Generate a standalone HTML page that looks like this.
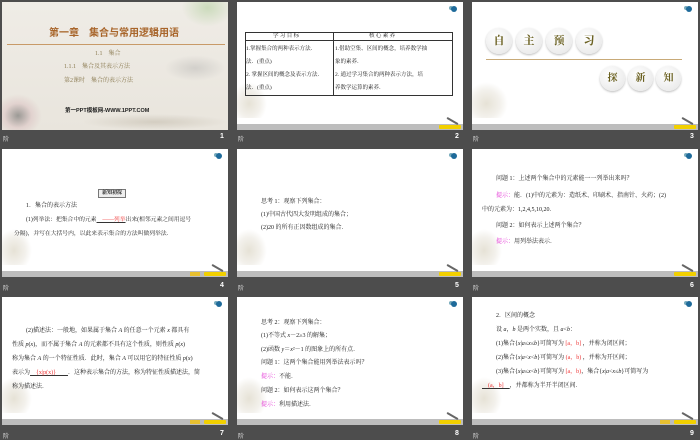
<!DOCTYPE html>
<html><head><meta charset="utf-8"><style>
*{margin:0;padding:0;box-sizing:border-box}
body{width:700px;height:438px;background:#4d4d4d;position:relative;overflow:hidden;font-family:"Liberation Serif","Noto Serif CJK SC","Noto Sans CJK SC",serif;}
.s{position:absolute;width:226px;height:128px;background:#fff;overflow:hidden}
.bar{position:absolute;left:0;right:0;bottom:0;height:6px;background:#bdbdbd}
.bd{position:absolute;bottom:1px;right:2px;width:22px;height:4px;background:#f2d000;border-radius:1px}
.bd2{position:absolute;bottom:1px;right:28px;width:10px;height:4px;background:#e8c030}
.pen{position:absolute;right:4px;bottom:8px;width:13px;height:2px;background:#666;transform:rotate(30deg);border-radius:2px}
.ic{position:absolute;right:6px;top:4px;width:6px;height:6px;border-radius:50%;background:#1e6a9a;box-shadow:-3px -1px 0 -1px #7ab}
.fl{position:absolute;left:0;bottom:6px;width:30px;height:36px;background:radial-gradient(ellipse at 40% 60%,#e6e2d6 0,#f3f1ec 45%,rgba(255,255,255,0) 70%)}
.cap{position:absolute;color:#ddd;font-size:6px;font-family:"Liberation Sans","Noto Sans CJK SC",sans-serif}
.n{position:absolute;color:#fff;font-size:7px;font-weight:bold;font-family:"Liberation Sans",sans-serif}
.t{position:absolute;font-size:6px;color:#1a1a1a;white-space:nowrap;line-height:7px}
.r{color:#e33}.m{color:#e020d0}
</style></head><body>

<!-- slide1 -->
<div class="s" style="left:2px;top:2px;background:linear-gradient(#efece6,#e9e5dd)">
<div style="position:absolute;left:175px;top:0;width:51px;height:28px;background:radial-gradient(ellipse at 60% 20%,rgba(120,180,90,.3),rgba(0,0,0,0) 60%)"></div>
<div style="position:absolute;left:160px;top:52px;width:66px;height:28px;background:radial-gradient(ellipse,rgba(150,150,150,.3),rgba(0,0,0,0) 65%)"></div>
<div style="position:absolute;left:0;top:92px;width:40px;height:36px;background:radial-gradient(ellipse at 40% 60%,rgba(60,60,60,.45),rgba(200,150,160,.25) 40%,rgba(0,0,0,0) 70%)"></div>
<div style="position:absolute;left:80px;top:112px;width:146px;height:16px;background:radial-gradient(ellipse,rgba(170,160,140,.35),rgba(0,0,0,0) 70%)"></div>
<div class="t" style="left:47px;top:26px;font-size:10px;line-height:12px;color:#a8652a;font-weight:bold;font-family:'Liberation Sans','Noto Sans CJK SC',sans-serif">第一章　集合与常用逻辑用语</div>
<div style="position:absolute;left:5px;top:42px;width:218px;height:1px;background:#c89a68"></div>
<div class="t" style="left:93px;top:49px;color:#8a7a50">1.1　集合</div>
<div class="t" style="left:62px;top:62px;color:#8a7a50">1.1.1　集合及其表示方法</div>
<div class="t" style="left:62px;top:76px;color:#8a7a50">第2课时　集合的表示方法</div>
<div class="t" style="left:63px;top:106px;font-size:5.5px;font-weight:bold;color:#222;font-family:'Liberation Sans','Noto Sans CJK SC',sans-serif">第一PPT模板网-WWW.1PPT.COM</div>
</div>
<div class="cap" style="left:3px;top:134px">阶</div><div class="n" style="left:220px;top:133px">1</div>

<!-- slide2 -->
<div class="s" style="left:237px;top:2px">
<div class="ic"></div><div class="fl" style="top:80px"></div><div class="bar"></div><div class="bd"></div><div class="pen"></div>
<div style="position:absolute;left:8px;top:30px;width:208px;height:64px;border:1px solid #333"></div>
<div style="position:absolute;left:8px;top:38px;width:208px;height:1px;background:#333"></div>
<div style="position:absolute;left:96px;top:30px;width:1px;height:64px;background:#333"></div>
<div class="t" style="left:36px;top:31px;font-size:5.5px">学 习 目 标</div>
<div class="t" style="left:132px;top:31px;font-size:5.5px">核 心 素 养</div>
<div class="t" style="left:9px;top:41px;font-size:5.5px;line-height:13px">1.掌握集合的两种表示方法．<br>法．(重点)<br>2. 掌握区间的概念及表示方法．<br>法．(重点)</div>
<div class="t" style="left:98px;top:41px;font-size:5.5px;line-height:13px">1.借助空集、区间的概念，培养数学抽<br>象的素养．<br>2. 通过学习集合的两种表示方法，培<br>养数学运算的素养．</div>
</div>
<div class="cap" style="left:238px;top:134px">阶</div><div class="n" style="left:455px;top:133px">2</div>

<!-- slide3 -->
<div class="s" style="left:472px;top:2px">
<div class="ic"></div><div class="fl" style="top:80px;width:36px"></div><div class="bar"></div><div class="bd"></div><div class="pen"></div>
<div style="position:absolute;left:14px;top:26px;display:flex;gap:4px">
<span style="width:26px;height:26px;border-radius:50%;background:radial-gradient(circle at 40% 35%,#fff,#e4e4e4);box-shadow:0 1px 2px #bbb;font-size:11px;font-weight:bold;color:#6a6020;text-align:center;line-height:26px">自</span>
<span style="width:26px;height:26px;border-radius:50%;background:radial-gradient(circle at 40% 35%,#fff,#e4e4e4);box-shadow:0 1px 2px #bbb;font-size:11px;font-weight:bold;color:#6a6020;text-align:center;line-height:26px">主</span>
<span style="width:26px;height:26px;border-radius:50%;background:radial-gradient(circle at 40% 35%,#fff,#e4e4e4);box-shadow:0 1px 2px #bbb;font-size:11px;font-weight:bold;color:#6a6020;text-align:center;line-height:26px">预</span>
<span style="width:26px;height:26px;border-radius:50%;background:radial-gradient(circle at 40% 35%,#fff,#e4e4e4);box-shadow:0 1px 2px #bbb;font-size:11px;font-weight:bold;color:#6a6020;text-align:center;line-height:26px">习</span>
</div>
<div style="position:absolute;left:14px;top:57px;width:196px;height:1px;background:#c8aa78"></div>
<div style="position:absolute;left:128px;top:64px;display:flex;gap:3px">
<span style="width:25px;height:25px;border-radius:50%;background:radial-gradient(circle at 40% 35%,#fff,#e4e4e4);box-shadow:0 1px 2px #bbb;font-size:10px;font-weight:bold;color:#6a6020;text-align:center;line-height:25px">探</span>
<span style="width:25px;height:25px;border-radius:50%;background:radial-gradient(circle at 40% 35%,#fff,#e4e4e4);box-shadow:0 1px 2px #bbb;font-size:10px;font-weight:bold;color:#6a6020;text-align:center;line-height:25px">新</span>
<span style="width:25px;height:25px;border-radius:50%;background:radial-gradient(circle at 40% 35%,#fff,#e4e4e4);box-shadow:0 1px 2px #bbb;font-size:10px;font-weight:bold;color:#6a6020;text-align:center;line-height:25px">知</span>
</div>
</div>
<div class="cap" style="left:473px;top:134px">阶</div><div class="n" style="left:690px;top:133px">3</div>

<!-- slide4 -->
<div class="s" style="left:2px;top:149px">
<div class="ic"></div><div class="fl" style="top:80px"></div><div class="bar"></div><div class="bd"></div><div class="bd2"></div><div class="pen"></div>
<div class="t" style="left:96px;top:40px;font-size:5px;border:1px solid #777;padding:0 3px;background:#eee;font-weight:bold">新知初探</div>
<div class="t" style="left:24px;top:54px;font-size:6px">1．集合的表示方法</div>
<div class="t" style="left:24px;top:68px;font-size:5.8px">(1)列举法：把集合中的元素<span class="r" style="text-decoration:underline;text-decoration-color:#333">　——列举</span>出来(相邻元素之间用逗号</div>
<div class="t" style="left:12px;top:82px;font-size:5.8px">分隔)，并写在大括号内，以此来表示集合的方法叫做列举法．</div>
</div>
<div class="cap" style="left:3px;top:283px">阶</div><div class="n" style="left:220px;top:282px">4</div>

<!-- slide5 -->
<div class="s" style="left:237px;top:149px">
<div class="ic"></div><div class="fl" style="top:80px"></div><div class="bar"></div><div class="bd"></div><div class="pen"></div>
<div class="t" style="left:24px;top:50px">思考 1：观察下列集合：</div>
<div class="t" style="left:24px;top:63px">(1)中国古代四大发明组成的集合；</div>
<div class="t" style="left:24px;top:76px">(2)20 的所有正因数组成的集合．</div>
</div>
<div class="cap" style="left:238px;top:283px">阶</div><div class="n" style="left:455px;top:282px">5</div>

<!-- slide6 -->
<div class="s" style="left:472px;top:149px">
<div class="ic"></div><div class="fl" style="top:80px"></div><div class="bar"></div><div class="bd"></div><div class="pen"></div>
<div class="t" style="left:24px;top:27px">问题 1：上述两个集合中的元素能一一列举出来吗？</div>
<div class="t" style="left:24px;top:44px"><span class="m">提示：</span>能．(1)中的元素为：造纸术、印刷术、指南针、火药；(2)</div>
<div class="t" style="left:10px;top:58px">中的元素为：1,2,4,5,10,20.</div>
<div class="t" style="left:24px;top:74px">问题 2：如何表示上述两个集合？</div>
<div class="t" style="left:24px;top:90px"><span class="m">提示：</span>用列举法表示．</div>
</div>
<div class="cap" style="left:473px;top:283px">阶</div><div class="n" style="left:690px;top:282px">6</div>

<!-- slide7 -->
<div class="s" style="left:2px;top:297px">
<div class="ic"></div><div class="fl" style="top:80px"></div><div class="bar"></div><div class="bd"></div><div class="bd2"></div><div class="pen"></div>
<div class="t" style="left:24px;top:31px">(2)描述法：一般地，如果属于集合 <i>A</i> 的任意一个元素 <i>x</i> 都具有</div>
<div class="t" style="left:10px;top:45px">性质 <i>p</i>(<i>x</i>)，而不属于集合 <i>A</i> 的元素都不具有这个性质，则性质 <i>p</i>(<i>x</i>)</div>
<div class="t" style="left:10px;top:59px">称为集合 <i>A</i> 的一个特征性质．此时，集合 <i>A</i> 可以用它的特征性质 <i>p</i>(<i>x</i>)</div>
<div class="t" style="left:10px;top:73px">表示为<span class="r" style="text-decoration:underline;text-decoration-color:#333">　{x|p(x)}　　</span>．这种表示集合的方法，称为特征性质描述法，简</div>
<div class="t" style="left:10px;top:87px">称为描述法．</div>
</div>
<div class="cap" style="left:3px;top:431px">阶</div><div class="n" style="left:220px;top:430px">7</div>

<!-- slide8 -->
<div class="s" style="left:237px;top:297px">
<div class="ic"></div><div class="fl" style="top:80px"></div><div class="bar"></div><div class="bd"></div><div class="pen"></div>
<div class="t" style="left:24px;top:23px">思考 2：观察下列集合：</div>
<div class="t" style="left:24px;top:36px">(1)不等式 <i>x</i>－2≥3 的解集；</div>
<div class="t" style="left:24px;top:50px">(2)函数 <i>y</i>＝<i>x</i>²－1 的图象上的所有点．</div>
<div class="t" style="left:24px;top:63px">问题 1：这两个集合能用列举法表示吗？</div>
<div class="t" style="left:24px;top:77px"><span class="m">提示：</span>不能．</div>
<div class="t" style="left:24px;top:91px">问题 2：如何表示这两个集合？</div>
<div class="t" style="left:24px;top:105px"><span class="m">提示：</span>利用描述法．</div>
</div>
<div class="cap" style="left:238px;top:431px">阶</div><div class="n" style="left:455px;top:430px">8</div>

<!-- slide9 -->
<div class="s" style="left:472px;top:297px">
<div class="ic"></div><div class="fl" style="top:80px"></div><div class="bar"></div><div class="bd"></div><div class="bd2"></div><div class="pen"></div>
<div class="t" style="left:24px;top:16px">2．区间的概念</div>
<div class="t" style="left:24px;top:30px">设 <i>a</i>，<i>b</i> 是两个实数，且 <i>a</i>&lt;<i>b</i>：</div>
<div class="t" style="left:24px;top:44px">(1)集合{<i>x</i>|<i>a</i>≤<i>x</i>≤<i>b</i>}可简写为 <span class="r">[a，b]</span> ，并称为闭区间；</div>
<div class="t" style="left:24px;top:58px">(2)集合{<i>x</i>|<i>a</i>&lt;<i>x</i>&lt;<i>b</i>}可简写为 <span class="r">(a，b)</span> ，并称为开区间；</div>
<div class="t" style="left:24px;top:72px">(3)集合{<i>x</i>|<i>a</i>≤<i>x</i>&lt;<i>b</i>}可简写为 <span class="r">[a，b)</span>，集合{<i>x</i>|<i>a</i>&lt;<i>x</i>≤<i>b</i>}可简写为</div>
<div class="t" style="left:10px;top:86px"><span class="r" style="text-decoration:underline;text-decoration-color:#333">　(a，b]　</span>，并都称为半开半闭区间．</div>
</div>
<div class="cap" style="left:473px;top:431px">阶</div><div class="n" style="left:690px;top:430px">9</div>

</body></html>
